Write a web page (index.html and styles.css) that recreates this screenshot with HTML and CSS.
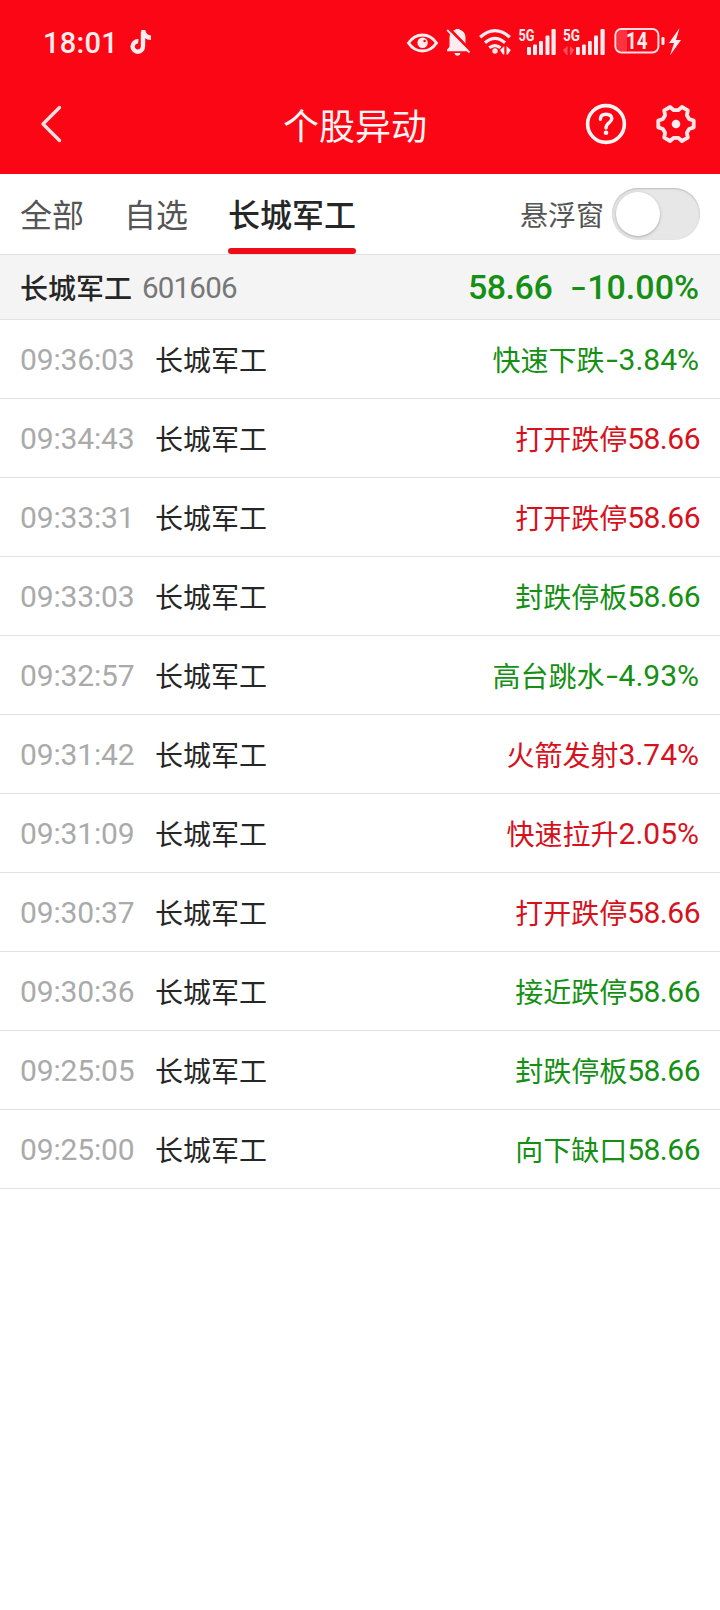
FILE: index.html
```
<!DOCTYPE html>
<html lang="zh-CN">
<head>
<meta charset="utf-8">
<title>个股异动</title>
<link rel="stylesheet" href="styles.css">
</head>
<body>
<header class="top">
  <div class="status">
    <span class="clock">18:01</span>
    <svg class="note" width="22" height="24" viewBox="0 0 22 24"><path d="M13 1.500V16.200A5.200 5.200 0 1 1 8.300 11.300" fill="none" stroke="#ffecee" stroke-width="4.400"/><path d="M11 0h4.200q1 5 5.800 5.500v4.600q-4-.2-6.500-2z" fill="#ffecee"/></svg>
    <svg class="indicators" width="276" height="32" viewBox="406 26 276 32" fill="#ffecee">
      <path d="M408.500 43Q414 35 422.500 35T436.500 43Q431 51 422.500 51T408.500 43Z" fill="none" stroke="#ffecee" stroke-width="3"/>
      <circle cx="422.600" cy="42.800" r="5.200"/><circle cx="424.600" cy="41" r="1.300" fill="#fb0614"/>
      <path d="M447 51.300v-1.500l2.500-3V38q0-7 6-8.200V29h4v.8q6 1.200 6 8.200v8.800l2.500 3v1.500z"/>
      <path d="M454.500 53h6q-.5 2.800-3 2.800t-3-2.800z"/>
      <path d="M449 28.500 471 51" stroke="#fb0614" stroke-width="3"/>
      <path d="M447.200 30 469.500 52.500" stroke="#ffecee" stroke-width="1.800"/>
      <g fill="none" stroke="#ffecee" stroke-width="3.200"><path d="M480.200 37.200Q495 24 509.800 37.200"/><path d="M485 42.700Q495 34 505 42.700"/><path d="M489.300 47.800Q495 43.300 500.500 47.800"/></g>
      <circle cx="495" cy="51" r="2.700"/>
      <path d="M504.300 46v8.500h-1.300L500 50zM506.500 46l4.300 4-3 4.500h-1.300z"/>
      <text class="net" x="518.500" y="41.200" textLength="16" lengthAdjust="spacingAndGlyphs">5G</text>
      <rect x="527" y="47" width="4" height="8" rx="1"/><rect x="533" y="44.500" width="4" height="10.500" rx="1"/><rect x="539" y="41" width="4" height="14" rx="1"/><rect x="545.500" y="35.500" width="4" height="19.500" rx="1"/><rect x="551.500" y="29" width="4.200" height="26" rx="1"/>
      <text class="net" x="563" y="41.200" textLength="17" lengthAdjust="spacingAndGlyphs">5G</text>
      <path d="M567.500 46v9h-1.200L563 50zM570 46l4 4-3 5h-1z" opacity=".35"/>
      <rect x="576" y="47" width="3.800" height="8" rx="1"/><rect x="582" y="44.500" width="3.800" height="10.500" rx="1"/><rect x="588" y="41" width="3.800" height="14" rx="1"/><rect x="594" y="35.500" width="4" height="19.500" rx="1"/><rect x="600.500" y="29" width="4.200" height="26" rx="1"/>
      <path d="M627 30h-5q-5 0-5 5v11q0 5 5 5h5z" opacity=".2"/>
      <rect x="615.400" y="29" width="43" height="23.500" rx="6" fill="none" stroke="#ffdcdf" stroke-width="2"/>
      <rect x="661.500" y="37" width="3" height="8" rx="1.200"/>
      <text class="charge" x="626" y="49" textLength="21.500" lengthAdjust="spacingAndGlyphs">14</text>
      <path d="M679.500 28 669 43h5L670 55.500 681 40h-5z"/>
    </svg>
  </div>
  <nav class="nav">
    <svg class="back" width="22" height="40" viewBox="0 0 22 40"><path d="M19.500 3.500 3 20 19.500 36.500" fill="none" stroke="#ffe0e2" stroke-width="3.400" stroke-linecap="round" stroke-linejoin="round"/></svg>
    <h1 class="title">个股异动</h1>
    <svg class="help" width="42" height="42" viewBox="-21 -21 42 42" fill="none" stroke="#fff4f4"><circle r="18.400" stroke-width="3.600"/><path d="M-5.600-4.800Q-5.600-9.800 0-9.800T5.800-5.300C5.800-1.500 0-1.300 0 4" stroke-width="3.400" stroke-linecap="round"/><circle cy="8.700" r="2.300" fill="#fff4f4" stroke="none"/></svg>
    <svg class="gear" width="42" height="42" viewBox="-21 -21 42 42"><path d="M17.700-3.400V3.400L13.100 5 10.900 8.800 11.800 13.600 5.900 17 2.200 13.800H-2.200L-5.900 17-11.800 13.600-10.900 8.800-13.100 5-17.700 3.400V-3.400L-13.100-5-10.900-8.800-11.800-13.600-5.900-17-2.200-13.800H2.200L5.900-17 11.800-13.600 10.900-8.800 13.100-5Z" fill="none" stroke="#ffe8ea" stroke-width="3.800" stroke-linejoin="round"/><circle r="4.300" fill="#ffecee"/></svg>
  </nav>
</header>
<div class="tabs">
  <span class="tab">全部</span>
  <span class="tab">自选</span>
  <span class="tab active">长城军工</span>
  <span class="float-label">悬浮窗</span>
  <span class="switch"><span class="knob"></span></span>
</div>
<section class="summary">
  <strong class="stock">长城军工</strong><span class="code">601606</span>
  <span class="price">58.66</span><span class="change"><span class="minus">-</span>10.00%</span>
</section>
<main class="list">
  <div class="row"><time class="time">09:36:03</time><span class="name">长城军工</span><span class="event down"><span class="kind">快速下跌</span><span class="num pct"><span class="minus">-</span>3.84%</span></span></div>
  <div class="row"><time class="time">09:34:43</time><span class="name">长城军工</span><span class="event up"><span class="kind">打开跌停</span><span class="num">58.66</span></span></div>
  <div class="row"><time class="time">09:33:31</time><span class="name">长城军工</span><span class="event up"><span class="kind">打开跌停</span><span class="num">58.66</span></span></div>
  <div class="row"><time class="time">09:33:03</time><span class="name">长城军工</span><span class="event down"><span class="kind">封跌停板</span><span class="num">58.66</span></span></div>
  <div class="row"><time class="time">09:32:57</time><span class="name">长城军工</span><span class="event down"><span class="kind">高台跳水</span><span class="num pct"><span class="minus">-</span>4.93%</span></span></div>
  <div class="row"><time class="time">09:31:42</time><span class="name">长城军工</span><span class="event up"><span class="kind">火箭发射</span><span class="num pct">3.74%</span></span></div>
  <div class="row"><time class="time">09:31:09</time><span class="name">长城军工</span><span class="event up"><span class="kind">快速拉升</span><span class="num pct">2.05%</span></span></div>
  <div class="row"><time class="time">09:30:37</time><span class="name">长城军工</span><span class="event up"><span class="kind">打开跌停</span><span class="num">58.66</span></span></div>
  <div class="row"><time class="time">09:30:36</time><span class="name">长城军工</span><span class="event down"><span class="kind">接近跌停</span><span class="num">58.66</span></span></div>
  <div class="row"><time class="time">09:25:05</time><span class="name">长城军工</span><span class="event down"><span class="kind">封跌停板</span><span class="num">58.66</span></span></div>
  <div class="row"><time class="time">09:25:00</time><span class="name">长城军工</span><span class="event down"><span class="kind">向下缺口</span><span class="num">58.66</span></span></div>
</main>
</body>
</html>
```
FILE: styles.css
```
* { box-sizing: border-box; }
body { margin: 0; min-height: 1610px; background: #fff; color: #262626; font-family: "Noto Sans CJK SC", sans-serif; }
.top { height: 174px; background: #fb0614; color: #fff4f4; }
.status { display: flex; align-items: center; height: 84px; padding: 0 38px 0 43px; }
.clock { width: 87px; padding-top: 1px; font: 500 29px/40px Roboto, sans-serif; letter-spacing: .3px; color: #ffecee; }
.indicators { margin-left: auto; }
.net { font: 700 16px Roboto, sans-serif; }
.charge { font: 700 23px Roboto, sans-serif; }
.nav { display: flex; align-items: center; height: 80px; padding: 0 23px 0 40px; }
.title { margin: 0 0 0 221px; font-size: 36px; font-weight: 400; line-height: 50px; }
.help { margin-left: auto; }
.gear { margin-left: 28px; }
.tabs { display: flex; align-items: center; height: 81px; padding: 0 20px; border-bottom: 1px solid #e2e2e2; font-size: 32px; line-height: 48px; color: #555; }
.tab { display: flex; align-items: center; height: 80px; padding-bottom: 2px; margin-right: 40px; }
.active { position: relative; font-weight: 500; color: #262626; }
.active::after { content: ""; position: absolute; left: 0; right: 0; bottom: 0; height: 6px; border-radius: 3px; background: #ef0b17; }
.float-label { margin-left: auto; font-size: 28px; }
.switch { width: 88px; height: 52px; margin-left: 8px; padding: 4px; border-radius: 26px; background: #e7e7e7; box-shadow: inset 0 1px 2px #bbb; }
.knob { display: block; width: 44px; height: 44px; border-radius: 50%; background: #fff; box-shadow: 0 1px 3px #aaa; }
.summary { display: flex; align-items: center; height: 65px; padding: 0 20px; background: #f4f4f4; border-bottom: 1px solid #e2e2e2; }
.stock { padding-bottom: 1px; font-size: 28px; font-weight: 500; line-height: 40px; }
.code { margin-left: 10px; padding-top: 1px; font: 400 29.500px/40px Roboto, sans-serif; letter-spacing: -.8px; color: #777; }
.price, .change { font: 500 34px/44px Roboto, sans-serif; letter-spacing: -.5px; color: #159015; }
.price { margin-left: auto; }
.change { margin: 0 1px 0 18px; letter-spacing: 0; }
.minus { display: inline-block; width: 17px; text-align: center; transform: scaleX(1.4); }
.row { display: flex; align-items: center; height: 79px; padding: 0 20px; border-bottom: 1px solid #e2e2e2; font-size: 28px; line-height: 40px; }
.time { width: 135px; padding-top: 2px; font: 400 30px/40px Roboto, sans-serif; letter-spacing: -.15px; color: #aaa; }
.name, .kind { padding-bottom: 1px; }
.event { display: flex; align-items: center; margin-left: auto; }
.num { padding-top: 2px; font: 400 30px/40px Roboto, sans-serif; letter-spacing: -.5px; }
.pct { margin-right: 1px; letter-spacing: 0; }
.pct .minus { width: 14px; }
.down { color: #159015; }
.up { color: #d5121d; }
```
